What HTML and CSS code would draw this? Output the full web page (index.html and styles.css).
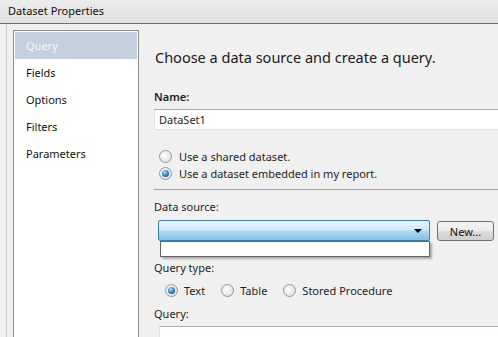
FILE: index.html
```html
<!DOCTYPE html>
<html lang="en">
<head>
    <meta charset="UTF-8">
    <title>Dataset Properties</title>
    <link rel="stylesheet" href="styles.css">
</head>
<body>
    <div class="titlebar">Dataset Properties</div>

    <div class="dialog">
        <div class="sidebar">
            <ul class="nav-list">
                <li class="nav-item selected">Query</li>
                <li class="nav-item">Fields</li>
                <li class="nav-item">Options</li>
                <li class="nav-item">Filters</li>
                <li class="nav-item">Parameters</li>
            </ul>
        </div>

        <div class="main">
            <h1 class="heading">Choose a data source and create a query.</h1>

            <label class="label name-label">Name:</label>
            <div class="textbox name-box">DataSet1</div>

            <div class="radio-row first-radio">
                <span class="radio"></span>
                <span>Use a shared dataset.</span>
            </div>
            <div class="radio-row second-radio">
                <span class="radio checked"></span>
                <span>Use a dataset embedded in my report.</span>
            </div>

            <div class="separator"></div>

            <label class="label source-label">Data source:</label>
            <div class="combo-row">
                <div class="combo">
                    <span class="combo-arrow"></span>
                    <div class="combo-popup"></div>
                </div>
                <button class="btn">New...</button>
            </div>

            <label class="label type-label">Query type:</label>
            <div class="type-row">
                <div class="radio-option">
                    <span class="radio checked"></span>
                    <span>Text</span>
                </div>
                <div class="radio-option">
                    <span class="radio"></span>
                    <span>Table</span>
                </div>
                <div class="radio-option">
                    <span class="radio"></span>
                    <span>Stored Procedure</span>
                </div>
            </div>

            <label class="label query-label">Query:</label>
            <div class="textbox query-box"></div>
        </div>
    </div>
</body>
</html>
```

FILE: styles.css
```css
* {
    margin: 0;
    padding: 0;
    box-sizing: border-box;
}

body {
    font-family: 'Noto Sans', 'DejaVu Sans', sans-serif;
    font-size: 11px;
    color: #1e1e1e;
    background: #f0f0f0;
    height: 337px;
    overflow: hidden;
}

.titlebar {
    height: 24px;
    line-height: 21px;
    padding-left: 8px;
    font-size: 11px;
    background: linear-gradient(#ececec, #e0e0e0);
    border-bottom: 1px solid #6e6e6e;
    color: #101010;
}

.dialog {
    display: flex;
    height: 313px;
}

.sidebar {
    margin-left: 6px;
    border-left: 1px solid #c9c9c9;
    padding: 6px 0 0 6px;
    background: #f0f0f0;
}

.nav-list {
    list-style: none;
    width: 126px;
    height: 100%;
    background: #fff;
    border: 1px solid #8a8d92;
    border-bottom: none;
    padding: 1px;
}

.nav-item {
    height: 27px;
    line-height: 27px;
    padding-left: 11px;
    color: #111;
}

.nav-item.selected {
    background: #c4d0dd;
    color: #f4f7fb;
}

.main {
    flex: 1;
    margin-left: 15px;
    display: flex;
    flex-direction: column;
    min-width: 0;
}

.main > * {
    flex-shrink: 0;
}

.heading {
    font-size: 14.5px;
    font-weight: normal;
    line-height: 20px;
    margin-top: 23px;
    margin-left: 1px;
    color: #1b1b1b;
    white-space: nowrap;
}

.label {
    display: block;
    line-height: 16px;
}

.name-label {
    margin-top: 22px;
    font-weight: 600;
}

.textbox {
    background: #fff;
    border: 1px solid #dfe3e8;
    border-top-color: #a9acb2;
    border-right: none;
    height: 21px;
    line-height: 19px;
    padding-left: 4px;
}

.name-box {
    margin-top: 4px;
}

.radio-row {
    display: flex;
    align-items: center;
    gap: 7px;
    height: 16px;
    padding-left: 5px;
}

.first-radio {
    margin-top: 18px;
}

.second-radio {
    margin-top: 1px;
}

.radio {
    width: 13px;
    height: 13px;
    border-radius: 50%;
    border: 1px solid #979797;
    background: radial-gradient(circle at 40% 40%, #ffffff, #e2e2e2 70%, #cfcfcf);
    position: relative;
    flex: none;
}

.radio.checked::after {
    content: '';
    position: absolute;
    left: 2px;
    top: 2px;
    width: 7px;
    height: 7px;
    border-radius: 50%;
    background: radial-gradient(circle at 40% 35%, #a8dcff, #2a7bc4 55%, #0d3f7a);
}

.separator {
    margin-top: 8px;
    height: 1px;
    background: #a0a0a0;
}

.source-label {
    margin-top: 9px;
}

.combo-row {
    display: flex;
    align-items: flex-start;
    margin-top: 5px;
    padding-left: 4px;
}

.combo {
    position: relative;
    width: 272px;
    height: 21px;
    border: 1px solid #3c7fb1;
    border-radius: 2px;
    background: linear-gradient(#e6f4fc 0%, #d3ecfa 45%, #aad8f4 55%, #84c2ea 100%);
}

.combo-arrow {
    position: absolute;
    right: 7px;
    top: 8px;
    border-left: 4px solid transparent;
    border-right: 4px solid transparent;
    border-top: 4px solid #000;
}

.combo-popup {
    position: absolute;
    left: 1px;
    top: 20px;
    width: 270px;
    height: 16px;
    background: #fff;
    border: 1px solid #646464;
    box-shadow: 2px 2px 2px rgba(0, 0, 0, 0.3);
}

.btn {
    margin-left: 7px;
    margin-top: 1px;
    width: 57px;
    height: 20px;
    font-family: inherit;
    font-size: 11px;
    color: #111;
    border: 1px solid #707070;
    border-radius: 3px;
    background: linear-gradient(#f2f2f2 0%, #ebebeb 50%, #dddddd 51%, #cfcfcf 100%);
}

.type-label {
    margin-top: 19px;
}

.type-row {
    display: flex;
    align-items: center;
    height: 16px;
    margin-top: 6px;
    padding-left: 11px;
    gap: 16px;
}

.radio-option {
    display: flex;
    align-items: center;
    gap: 6px;
}

.query-label {
    margin-top: 8px;
}

.query-box {
    margin-top: 4px;
    margin-left: 5px;
    height: 11px;
    border-bottom: none;
}
```
